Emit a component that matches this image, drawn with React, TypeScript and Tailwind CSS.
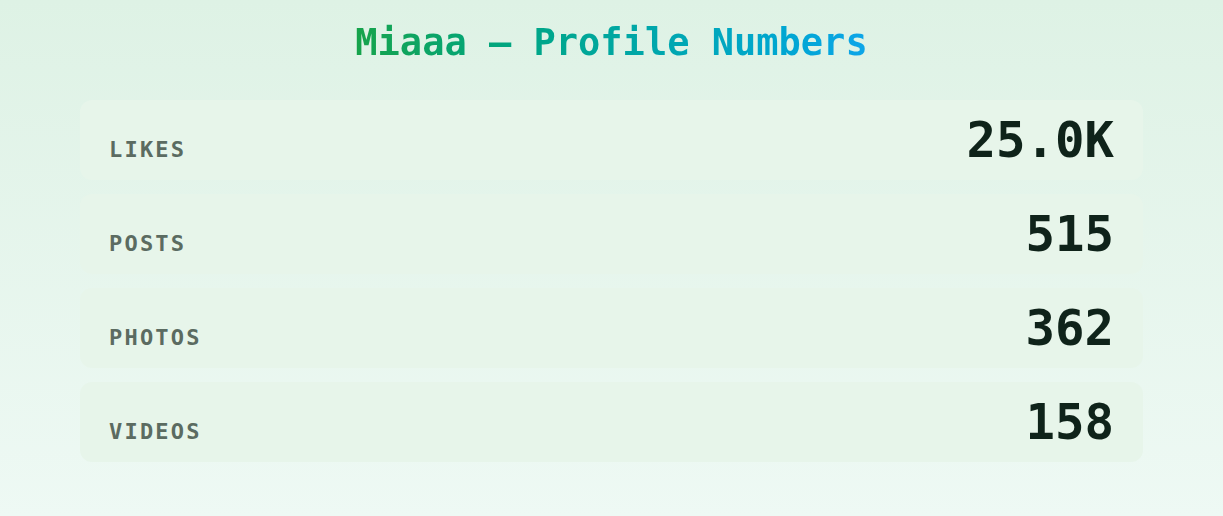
import React from "react";

const stats = [
  { label: "Likes", value: "25.0K" },
  { label: "Posts", value: "515" },
  { label: "Photos", value: "362" },
  { label: "Videos", value: "158" },
];

const App = () => {
  return (
    <div className="min-h-[516px] w-full bg-linear-to-b from-[#def2e5] to-[#eef9f4] px-20 font-['DejaVu_Sans_Mono',monospace]">
      <h1 className="pt-[19px] text-center text-[37px] leading-[48px] font-bold">
        <span className="bg-linear-to-r from-[#16a34a] to-[#0ea5e9] bg-clip-text text-transparent">
          Miaaa — Profile Numbers
        </span>
      </h1>
      <div className="mt-[33px] flex flex-col gap-[14px]">
        {stats.map((s) => (
          <div
            key={s.label}
            className="flex h-20 items-baseline justify-between rounded-xl bg-[#e7f5ea] px-[29px] pt-4"
          >
            <span className="text-[22px] font-bold uppercase tracking-[0.1em] text-[#5b6b61]">
              {s.label}
            </span>
            <span className="text-[49px] leading-none font-bold text-[#0f231a]">{s.value}</span>
          </div>
        ))}
      </div>
    </div>
  );
};

export default App;
